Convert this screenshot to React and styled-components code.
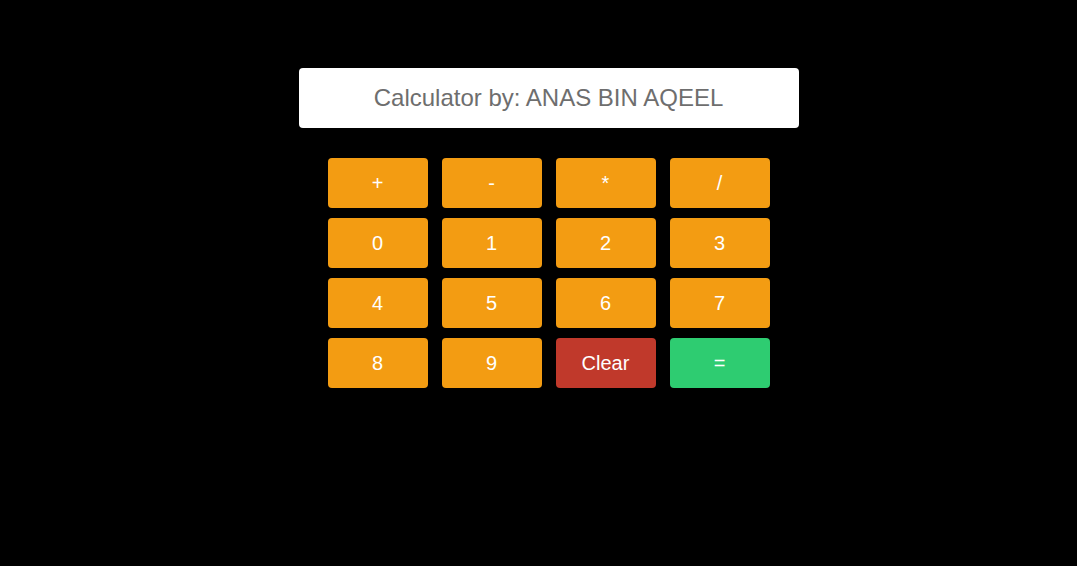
import React from 'react';
import styled, { createGlobalStyle } from 'styled-components';

const GlobalStyle = createGlobalStyle`
    body {
        margin: 0;
        background: #000;
        font-family: "Liberation Sans", Arial, sans-serif;
    }
`;

const Page = styled.div`
    display: flex;
    flex-direction: column;
    align-items: center;
    padding: 68px 0 0 20px;
    min-height: 566px;
    box-sizing: border-box;
`;

const Display = styled.div`
    width: 500px;
    height: 60px;
    background: #fff;
    border-radius: 4px;
    display: flex;
    align-items: center;
    justify-content: center;
    color: #6e6e6e;
    font-size: 24px;
`;

const Keys = styled.div`
    display: grid;
    grid-template-columns: repeat(4, 100px);
    grid-auto-rows: 50px;
    column-gap: 14px;
    row-gap: 10px;
    margin-top: 30px;
`;

const Key = styled.button`
    border: none;
    border-radius: 4px;
    background: ${(p) => p.$bg || '#f39c12'};
    color: #fff;
    font-family: inherit;
    font-size: 20px;
    padding: 0;
    cursor: pointer;
`;

const keys = ['+', '-', '*', '/', '0', '1', '2', '3', '4', '5', '6', '7', '8', '9'];

const App = () => (
    <Page>
        <GlobalStyle />
        <Display>Calculator by: ANAS BIN AQEEL</Display>
        <Keys>
            {keys.map((k) => (
                <Key key={k}>{k}</Key>
            ))}
            <Key $bg="#c0392b">Clear</Key>
            <Key $bg="#2ecc71">=</Key>
        </Keys>
    </Page>
);

export default App;
